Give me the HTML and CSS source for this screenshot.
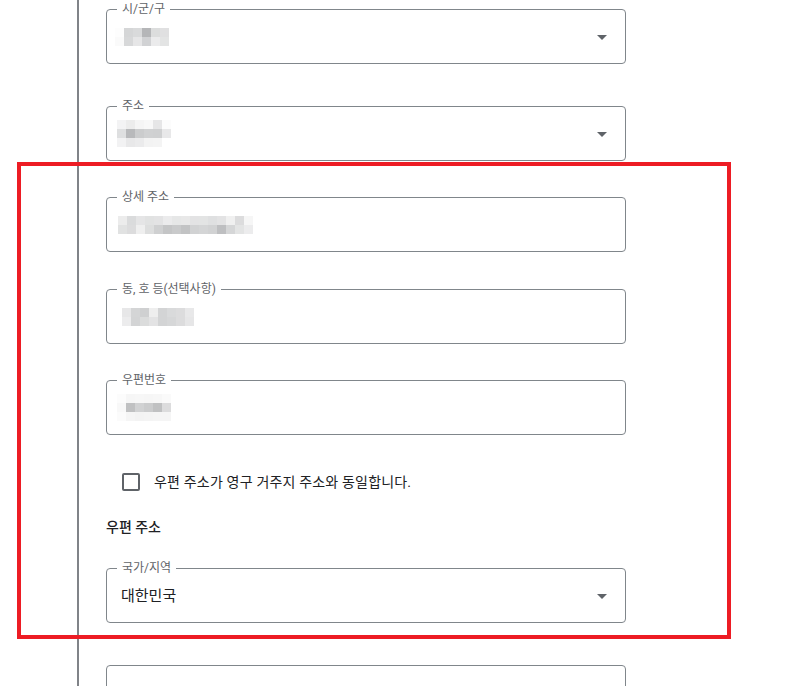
FILE: index.html
```html
<!DOCTYPE html>
<html lang="ko">
<head>
<meta charset="utf-8">
<title>주소 입력</title>
<link rel="stylesheet" href="styles.css">
</head>
<body>
<div class="page">
  <div class="gutter"></div>
  <main class="form">
    <div class="field select f1">
      <span class="label">시/군/구</span>
      <div class="mosaic m1">
        <i style="background:#fdfdfd"></i><i style="background:#d5d6d7"></i><i style="background:#d9dadb"></i><i style="background:#b5b6b8"></i><i style="background:#dcdddd"></i><i style="background:#e0e0e1"></i>
        <i style="background:#fafafa"></i><i style="background:#d7d8d9"></i><i style="background:#e6e6e7"></i><i style="background:#d1d2d4"></i><i style="background:#ebebec"></i><i style="background:#e3e4e4"></i>
      </div>
      <svg class="arrow" viewBox="0 0 24 24" width="24" height="24"><path d="M7 10l5 5 5-5z"/></svg>
    </div>

    <div class="field select f2">
      <span class="label">주소</span>
      <div class="mosaic m2">
        <i style="background:#f3f3f4"></i><i style="background:#ececec"></i><i style="background:#f5f5f5"></i><i style="background:#f8f8f8"></i><i style="background:#e6e6e7"></i><i style="background:#fcfcfc"></i>
        <i style="background:#dedfe0"></i><i style="background:#b8b9bb"></i><i style="background:#cbcccd"></i><i style="background:#d0d1d2"></i><i style="background:#cfd0d1"></i><i style="background:#e8e8e9"></i>
        <i style="background:#f2f2f3"></i><i style="background:#e8e8e9"></i><i style="background:#ebebec"></i><i style="background:#f3f3f3"></i><i style="background:#f4f4f4"></i><i style="background:#ffffff"></i>
      </div>
      <svg class="arrow" viewBox="0 0 24 24" width="24" height="24"><path d="M7 10l5 5 5-5z"/></svg>
    </div>

    <div class="field f3">
      <span class="label">상세 주소</span>
      <div class="mosaic m3">
        <i style="background:#ececec"></i><i style="background:#dadbdc"></i><i style="background:#e5e5e6"></i><i style="background:#e1e2e2"></i><i style="background:#e3e3e4"></i><i style="background:#ebebec"></i><i style="background:#e6e7e7"></i><i style="background:#e8e8e8"></i><i style="background:#e3e3e4"></i><i style="background:#e3e4e4"></i><i style="background:#dfe0e1"></i><i style="background:#e3e3e4"></i><i style="background:#f0f0f0"></i><i style="background:#dcdcdd"></i><i style="background:#f6f6f6"></i>
        <i style="background:#e1e2e2"></i><i style="background:#dcdcdd"></i><i style="background:#efefef"></i><i style="background:#dddede"></i><i style="background:#cfd0d1"></i><i style="background:#c4c5c6"></i><i style="background:#c9cacb"></i><i style="background:#c2c3c4"></i><i style="background:#d1d2d3"></i><i style="background:#d4d5d6"></i><i style="background:#d1d2d3"></i><i style="background:#bebfc1"></i><i style="background:#d5d6d7"></i><i style="background:#e3e4e4"></i><i style="background:#ececed"></i>
      </div>
    </div>

    <div class="field f4">
      <span class="label">동, 호 등(선택사항)</span>
      <div class="mosaic m4">
        <i style="background:#e7e7e8"></i><i style="background:#d4d5d6"></i><i style="background:#cfd0d1"></i><i style="background:#eeeeee"></i><i style="background:#d3d4d5"></i><i style="background:#d9dadb"></i><i style="background:#dcdcdd"></i><i style="background:#e8e8e9"></i>
        <i style="background:#ececed"></i><i style="background:#d3d4d5"></i><i style="background:#dbdcdc"></i><i style="background:#e3e3e4"></i><i style="background:#d3d4d5"></i><i style="background:#d6d7d8"></i><i style="background:#dcdcdd"></i><i style="background:#e6e6e7"></i>
      </div>
    </div>

    <div class="field f5">
      <span class="label">우편번호</span>
      <div class="mosaic m5">
        <i style="background:#fcfcfc"></i><i style="background:#f6f6f6"></i><i style="background:#f7f7f7"></i><i style="background:#f6f6f6"></i><i style="background:#f7f7f7"></i><i style="background:#fafafa"></i>
        <i style="background:#f8f8f8"></i><i style="background:#c0c1c2"></i><i style="background:#d1d2d3"></i><i style="background:#cbcccd"></i><i style="background:#c0c1c2"></i><i style="background:#dcdcdd"></i>
        <i style="background:#fbfbfb"></i><i style="background:#f5f5f5"></i><i style="background:#f3f3f3"></i><i style="background:#f4f4f4"></i><i style="background:#f5f5f5"></i><i style="background:#f5f5f5"></i>
      </div>
    </div>

    <label class="check-row">
      <span class="checkbox"></span>
      <span class="check-text">우편 주소가 영구 거주지 주소와 동일합니다.</span>
    </label>

    <h3 class="section-title">우편 주소</h3>

    <div class="field select f6">
      <span class="label">국가/지역</span>
      <span class="value">대한민국</span>
      <svg class="arrow" viewBox="0 0 24 24" width="24" height="24"><path d="M7 10l5 5 5-5z"/></svg>
    </div>

    <div class="field f7"></div>
  </main>
</div>
<div class="highlight"></div>
</body>
</html>
```

FILE: styles.css
```css
html, body {
  margin: 0;
  padding: 0;
  background: #ffffff;
  height: 100%;
  overflow: hidden;
}

body {
  font-family: "Roboto", "Noto Sans CJK KR", sans-serif;
  color: #202124;
}

.page {
  display: flex;
  min-height: 686px;
}

.gutter {
  width: 77px;
  flex: none;
}

.form {
  border-left: 2px solid #808388;
  padding-left: 27px;
  padding-top: 9px;
  display: flex;
  flex-direction: column;
  align-items: flex-start;
}

.field {
  position: relative;
  box-sizing: border-box;
  width: 520px;
  height: 55px;
  border: 1px solid #80868b;
  border-radius: 4px;
  padding: 0 14px;
  display: flex;
  align-items: center;
  flex: none;
}

.select {
  padding-right: 11px;
}

.f1 { margin-bottom: 42px; }
.f2 { margin-bottom: 36px; }
.f3 { margin-bottom: 37px; }
.f4 { margin-bottom: 36px; }
.f5 { margin-bottom: 38px; }
.f6 { margin-bottom: 42px; }

.label {
  position: absolute;
  left: 10px;
  top: -9px;
  padding: 0 5px 0 5px;
  background: #ffffff;
  font-size: 12px;
  line-height: 16px;
  color: #5f6368;
  white-space: nowrap;
}

.value {
  flex: 1;
  font-size: 15px;
  line-height: 20px;
  color: #202124;
}

.mosaic {
  display: grid;
  grid-auto-rows: 9px;
  grid-template-columns: repeat(var(--cols), 9px);
}

.mosaic i {
  display: block;
}

.m1 { --cols: 6; margin-left: -6px; margin-top: 1px; }
.m2 { --cols: 6; margin-left: -4px; margin-top: -1px; }
.m3 { --cols: 15; margin-left: -3px; margin-top: 1px; }
.m4 { --cols: 8; margin-left: 1px; margin-top: 1px; }
.m5 { --cols: 6; margin-left: -4px; }

.select .mosaic {
  margin-right: auto;
}

.arrow {
  flex: none;
  fill: #5f6368;
  display: block;
}

.check-row {
  display: flex;
  align-items: center;
  margin-left: 16px;
  gap: 14px;
  height: 18px;
  cursor: pointer;
}

.checkbox {
  box-sizing: border-box;
  width: 18px;
  height: 18px;
  border: 2px solid #5f6368;
  border-radius: 2px;
  flex: none;
}

.check-text {
  font-size: 14px;
  line-height: 20px;
  letter-spacing: 0.18px;
  color: #202124;
}

.section-title {
  margin: 26px 0 31px 0;
  font-size: 14px;
  line-height: 20px;
  font-weight: 500;
  color: #202124;
}

.highlight {
  position: absolute;
  left: 17px;
  top: 162px;
  width: 714px;
  height: 477px;
  box-sizing: border-box;
  border: 4px solid #ed1c24;
  pointer-events: none;
}
```
